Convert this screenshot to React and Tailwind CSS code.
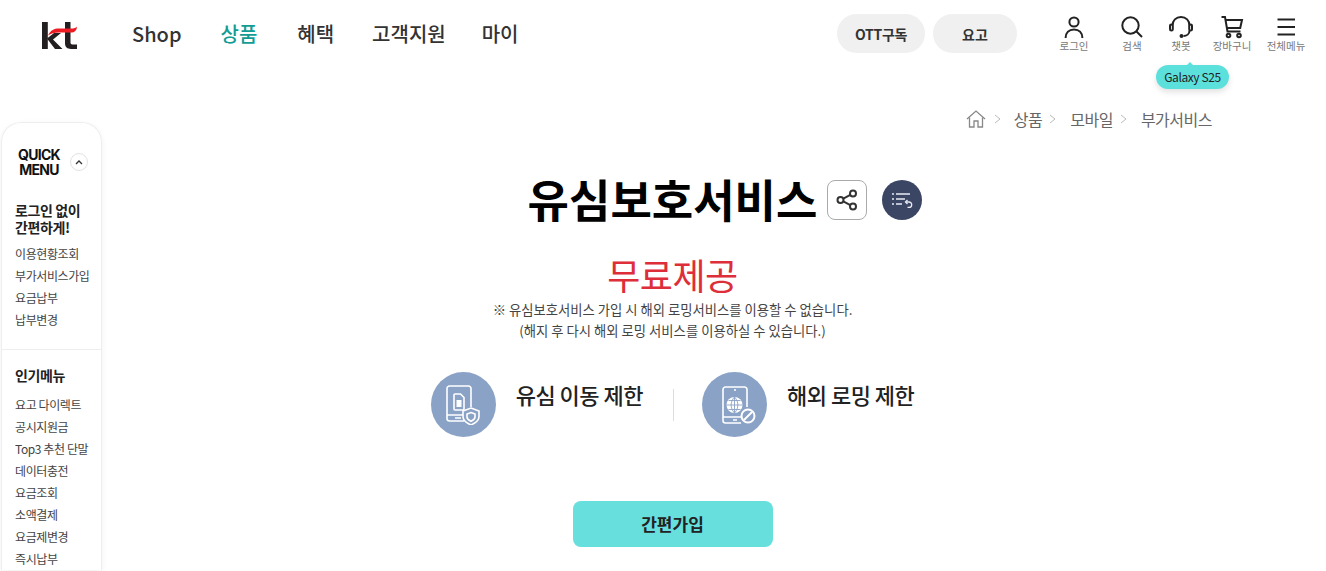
const font = { fontFamily: '"Noto Sans CJK KR", "Noto Sans", sans-serif' };

const quickLogin = ['이용현황조회', '부가서비스가입', '요금납부', '납부변경'];
const popular = ['요고 다이렉트', '공시지원금', 'Top3 추천 단말', '데이터충전', '요금조회', '소액결제', '요금제변경', '즉시납부'];
const gnb = [
  { label: 'Shop', className: 'mr-[39px] text-[#333]' },
  { label: '상품', className: 'mr-[40px] text-[#139c94]' },
  { label: '혜택', className: 'mr-[38px] text-[#333]' },
  { label: '고객지원', className: 'mr-[36px] text-[#333]' },
  { label: '마이', className: 'text-[#333]' },
];

const UserIcon = () => (
  <svg width="24" height="24" viewBox="0 0 24 24" fill="none" stroke="#222" strokeWidth="2">
    <circle cx="12" cy="7" r="4.6" />
    <path d="M3.6 23c0-5.4 3.4-8.6 8.4-8.6s8.4 3.2 8.4 8.6" />
  </svg>
);

const SearchIcon = () => (
  <svg width="24" height="24" viewBox="0 0 24 24" fill="none" stroke="#222" strokeWidth="2">
    <circle cx="10.5" cy="10.5" r="8.2" />
    <path d="M16.5 16.5 22 22" />
  </svg>
);

const ChatIcon = () => (
  <svg width="24" height="24" viewBox="0 0 24 24" fill="none" stroke="#222" strokeWidth="2">
    <path d="M3.5 10.5C3.5 5.5 7 2 12 2s8.5 3.5 8.5 8.5" />
    <rect x="1" y="9.5" width="2.8" height="6" rx="1.3" />
    <rect x="20.2" y="9.5" width="2.8" height="6" rx="1.3" />
    <path d="M20.5 15.5c0 3.5-3 5.5-6 5.5" />
    <circle cx="12.5" cy="21" r="1" fill="#222" />
  </svg>
);

const CartIcon = () => (
  <svg width="24" height="24" viewBox="0 0 24 24" fill="none" stroke="#222" strokeWidth="2">
    <path d="M1.5 2H5l2.5 14.5h13" />
    <path d="M5.5 5H22l-1.8 8H7" />
    <circle cx="8.5" cy="20.5" r="1.8" />
    <circle cx="19" cy="20.5" r="1.8" />
  </svg>
);

const MenuIcon = () => (
  <svg width="24" height="24" viewBox="0 0 24 24" fill="none" stroke="#222" strokeWidth="2">
    <path d="M3.5 4.5H21M3.5 12H21M3.5 19.5H21" />
  </svg>
);

const HomeIcon = () => (
  <svg width="20" height="18" viewBox="0 0 20 18" fill="none" stroke="#888" strokeWidth="1.3">
    <path d="M1 9 10 1l9 8" />
    <path d="M3.5 7.5V17H8v-6h4v6h4.5V7.5" />
  </svg>
);

const Chevron = () => (
  <svg width="7" height="10" viewBox="0 0 7 10" fill="none" stroke="#bbb" strokeWidth="1">
    <path d="m1 1 5 4-5 4" />
  </svg>
);

const ShareIcon = () => (
  <svg width="24" height="24" viewBox="0 0 24 24" fill="none" stroke="#333" strokeWidth="2">
    <circle cx="5.5" cy="12" r="3" />
    <circle cx="18" cy="5.5" r="3" />
    <circle cx="18" cy="18.5" r="3" />
    <path d="m8.3 10.6 7-3.7M8.3 13.4l7 3.7" />
  </svg>
);

const ListBackIcon = () => (
  <svg width="22" height="18" viewBox="0 0 22 18" fill="none" stroke="#e8ebf2" strokeWidth="1.3">
    <path d="M1 3h2M1 8h2M1 13h2" />
    <path d="M5 3h14M5 8h9M5 13h6" />
    <path d="M15 11h3a2.7 2.7 0 0 1 0 5.4h-1.5" />
    <path d="m16.5 9-2 2 2 2" />
  </svg>
);

const SimIcon = () => (
  <svg width="34" height="40" viewBox="0 0 34 40" fill="none" stroke="#fff" strokeWidth="1.6">
    <path d="M18 36H3.5A2.5 2.5 0 0 1 1 33.5v-30A2.5 2.5 0 0 1 3.500 1h19A2.500 2.500 0 0 1 25 3.500V22" />
    <path d="M1 30h16M9 33h6" />
    <path d="M9 9h5.500L18 12.500V24a1 1 0 0 1-1 1H9a1 1 0 0 1-1-1V10a1 1 0 0 1 1-1z" />
    <rect x="10.500" y="15" width="5" height="7" fill="#fff" stroke="none" />
    <path d="m25 23 8 3v5.500c0 3.800-3.300 6.500-8 8.500-4.700-2-8-4.700-8-8.500V26z" />
    <path d="m25 27.500 4 1.500v3c0 1.800-1.700 3.200-4 4.300-2.300-1.100-4-2.500-4-4.300v-3z" />
  </svg>
);

const GlobeIcon = () => (
  <svg className="ml-2" width="34" height="38" viewBox="0 0 34 38" fill="none" stroke="#fff" strokeWidth="1.6">
    <path d="M19 37H3.500A2.500 2.500 0 0 1 1 34.500v-31A2.500 2.500 0 0 1 3.500 1h19A2.500 2.500 0 0 1 25 3.500V21" />
    <path d="M1 31h18M11 34h4M12 4h2" />
    <circle cx="12.500" cy="19" r="8" fill="#fff" stroke="none" />
    <path d="M4.500 19h16M12.500 11v16M6.500 14.500h12M6.500 23.500h12" stroke="#8aa2c6" strokeWidth="0.9" />
    <path d="M12.500 11c-4.500 5-4.500 11 0 16M12.500 11c4.500 5 4.500 11 0 16" stroke="#8aa2c6" strokeWidth="0.9" />
    <circle cx="26" cy="30" r="6.500" fill="#8aa2c6" strokeWidth="2" />
    <path d="m22 34 8-8" strokeWidth="2" />
  </svg>
);

const IconLink = ({ label, width, children }) => (
  <div className="flex flex-col items-center" style={{ width }}>
    <div className="flex h-6 items-center justify-center">{children}</div>
    <span className="whitespace-nowrap text-[10.5px] leading-[14px] text-[#777]">{label}</span>
  </div>
);

const Feature = ({ title, children }) => (
  <div className="flex items-start gap-5">
    <div className="flex h-[65px] w-[65px] items-center justify-center rounded-full bg-[#8aa2c6]">{children}</div>
    <strong className="mt-[6px] whitespace-nowrap text-[22px] leading-[32px] font-medium tracking-[-0.5px] text-[#222]">{title}</strong>
  </div>
);

const App = () => (
  <div className="h-[571px] w-[1326px] overflow-hidden bg-white" style={font}>
    <header className="flex h-[70px] items-center">
      <div className="ml-[42px] w-[90px]">
        <svg width="36" height="29" viewBox="0 0 36 29">
          <path d="M0 1h5.800v27H0z" fill="#231f20" />
          <path d="m5 17.500 7-5.500h7l-8 6.500L20.500 28H13z" fill="#231f20" />
          <path d="M23 1h5.500v20.500c0 1.300.7 2 2 2H35V28h-6c-3.800 0-6-2-6-5.700z" fill="#231f20" />
          <path d="M6 14.500C9 9 12 7.500 17 7.500h12c3 0 5-.5 6-2-.3 4-2.500 6-6 6H17c-5 0-8 1-11 3z" fill="#ed1c24" />
        </svg>
      </div>
      <nav className="flex pb-[2px]">
        {gnb.map((item) => (
          <a key={item.label} className={`text-[20px] leading-[28px] font-medium ${item.className}`}>{item.label}</a>
        ))}
      </nav>
      <div className="ml-auto flex items-center">
        <div className="flex gap-2 pb-[3px]">
          <span className="flex h-[39px] w-[88px] items-center justify-center rounded-full bg-[#f0f0f0] text-sm font-bold tracking-[-0.3px] text-[#333]">OTT구독</span>
          <span className="flex h-[39px] w-[84px] items-center justify-center rounded-full bg-[#f0f0f0] text-sm font-bold text-[#333]">요고</span>
        </div>
        <div className="mr-[17px] ml-[28px] flex items-start pb-[2px]">
          <IconLink label="로그인" width={58}><UserIcon /></IconLink>
          <IconLink label="검색" width={58}><SearchIcon /></IconLink>
          <div className="relative">
            <IconLink label="챗봇" width={40}><ChatIcon /></IconLink>
            <div className="absolute top-[50px] left-[-5px] flex h-6 w-[73px] items-center justify-center rounded-full bg-[#5ce0dc] text-xs tracking-[-0.4px] whitespace-nowrap text-[#222] shadow-[0_3px_6px_rgba(0,0,0,0.12)]">
              <span className="absolute top-[-3px] left-[31px] h-0 w-0 border-x-[3px] border-b-[3px] border-x-transparent border-b-[#5ce0dc]" />
              Galaxy S25
            </div>
          </div>
          <IconLink label="장바구니" width={62}><CartIcon /></IconLink>
          <IconLink label="전체메뉴" width={46}><MenuIcon /></IconLink>
        </div>
      </div>
    </header>

    <div className="flex items-start">
      <aside className="mt-[52px] ml-[1px] w-[101px] shrink-0 rounded-t-[20px] border border-b-0 border-[#eeeeee] shadow-[0_2px_6px_rgba(0,0,0,0.06)]">
        <div className="border-b border-[#eeeeee] pt-[24px] pb-[18px] pl-[13px]">
          <div className="flex items-center">
            <span className="ml-[2px] w-[44px] text-center text-[14px] leading-[15px] font-bold tracking-[-0.7px] text-[#111]" style={{ fontFamily: 'Inter, sans-serif' }}>QUICK MENU</span>
            <span className="ml-[9px] flex h-[18px] w-[18px] items-center justify-center rounded-full border border-[#e2e2e2]">
              <svg width="8" height="5" viewBox="0 0 8 5" fill="none" stroke="#333" strokeWidth="1.3"><path d="m1 4 3-3 3 3" /></svg>
            </span>
          </div>
          <h3 className="mt-[25px] text-[14px] leading-[17px] font-bold tracking-[-0.4px] text-[#222]">로그인 없이<br />간편하게!</h3>
          <ul className="mt-[7px]">
            {quickLogin.map((item) => (
              <li key={item} className="text-xs leading-[22px] tracking-[-0.4px] whitespace-nowrap text-[#444]">{item}</li>
            ))}
          </ul>
        </div>
        <div className="pt-[15px] pl-[13px]">
          <h3 className="text-[14px] leading-[20px] font-bold tracking-[-0.4px] text-[#222]">인기메뉴</h3>
          <ul className="mt-[9px]">
            {popular.map((item) => (
              <li key={item} className="text-xs leading-[22px] tracking-[-0.4px] whitespace-nowrap text-[#444]">{item}</li>
            ))}
          </ul>
        </div>
      </aside>

      <main className="flex w-[1141px] flex-col items-center">
        <div className="mt-[38px] flex items-center self-end pr-[31px] text-base leading-[22px] tracking-[-0.5px] text-[#666]">
          <HomeIcon />
          <span className="mr-[13px] ml-[8px]"><Chevron /></span>
          <span>상품</span>
          <span className="mr-[14px] ml-[7px]"><Chevron /></span>
          <span>모바일</span>
          <span className="mr-[14px] ml-[7px]"><Chevron /></span>
          <span>부가서비스</span>
        </div>

        <div className="relative mt-[37px]">
          <h1 className="text-[45px] leading-[64px] font-bold text-black">유심보호서비스</h1>
          <div className="absolute top-[13px] left-full ml-[10px] flex gap-[15px]">
            <button className="flex h-10 w-10 items-center justify-center rounded-lg border border-[#aaa] bg-white"><ShareIcon /></button>
            <button className="flex h-10 w-10 items-center justify-center rounded-full bg-[#3a4664]"><ListBackIcon /></button>
          </div>
        </div>

        <p className="mt-[21px] text-[36px] leading-[44px] tracking-[-0.5px] text-[#dd2e3a]">무료제공</p>
        <p className="mt-[3px] text-center text-[13.33px] leading-[21px] text-[#444]">
          ※ 유심보호서비스 가입 시 해외 로밍서비스를 이용할 수 없습니다.<br />
          (해지 후 다시 해외 로밍 서비스를 이용하실 수 있습니다.)
        </p>

        <div className="mt-[31px] flex items-center">
          <Feature title="유심 이동 제한"><SimIcon /></Feature>
          <span className="mr-[28px] ml-[30px] h-8 w-px bg-[#dddddd]" />
          <Feature title="해외 로밍 제한"><GlobeIcon /></Feature>
        </div>

        <button className="mt-[64px] h-[46px] w-[200px] rounded-lg bg-[#66dfdd] text-[17px] font-bold text-[#222]">간편가입</button>
      </main>
    </div>
  </div>
);

export default App;
